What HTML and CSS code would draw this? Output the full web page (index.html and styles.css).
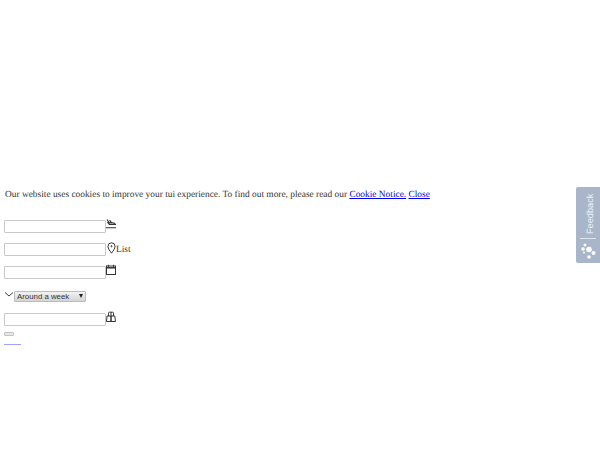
FILE: index.html
```html
<!DOCTYPE html>
<html lang="en">
<head>
  <meta charset="UTF-8" />
  <title>Holidays</title>
  <link rel="stylesheet" href="styles.css">
</head>
<body>
  <p class="cookie">Our website uses cookies to improve your tui experience. To find out more, please read our <a href="#">Cookie Notice.</a> <a href="#">Close</a></p>
  <form class="search">
    <div class="row">
      <input type="text" class="field" />
      <svg class="icon" viewBox="0 0 10 12" width="10" height="12" fill="none" stroke="#333" stroke-width="1.1"><path d="M1 1.5l2.2 3.4h3.3c1.2 0 2.6.4 3 1.6H3.4L1.4 4.2M3.6 2.2l2 2.7M0 9.7h10"/></svg>
    </div>
    <div class="row">
      <input type="text" class="field" />
      <svg class="icon pin" viewBox="0 0 9 12" width="9" height="12" fill="none" stroke="#333" stroke-width="1"><path d="M4.5 11.2C2.6 8.4 1 6.6 1 4.3a3.5 3.5 0 0 1 7 0c0 2.3-1.6 4.1-3.5 6.9z"/><circle cx="4.5" cy="4.2" r=".6"/></svg>
      <span class="label">List</span>
    </div>
    <div class="row">
      <input type="text" class="field" />
      <svg class="icon" viewBox="0 0 10 12" width="10" height="12" fill="none" stroke="#333" stroke-width="1"><rect x=".5" y="2" width="9" height="8.5"/><path d="M.5 3.8h9" stroke-width="1.5"/><path d="M2.5.8v2M7.5.8v2"/></svg>
    </div>
    <div class="row row-select">
      <svg class="chevron" viewBox="0 0 10 8" width="10" height="8" fill="none" stroke="#444" stroke-width="1"><path d="M1 1.5l4 3.5 4-3.5"/></svg>
      <div class="select-wrap">
        <select class="duration"><option>Around a week</option></select>
      </div>
    </div>
    <div class="row row-last">
      <input type="text" class="field" />
      <svg class="icon" viewBox="0 0 10 12" width="10" height="12" fill="none" stroke="#333" stroke-width="1"><path d="M.5 10.5l.5-5.5h4v5.5zM5 10.5V5h3.8l.7 5.5zM2.5 5V2.2a1 1 0 0 1 1-1h3a1 1 0 0 1 1 1V5M5 1.2V5"/></svg>
    </div>
    <button type="button" class="submit"></button>
    <a href="#" class="more"></a>
  </form>
  <div class="feedback">
    <span class="feedback-label">Feedback</span>
    <svg class="feedback-icon" viewBox="0 0 16 16" width="16" height="16" fill="#fff"><circle cx="5" cy="2" r="1.5"/><circle cx="3" cy="6" r="1.8"/><circle cx="9" cy="6.5" r="2.8"/><circle cx="13.5" cy="10" r="2"/><circle cx="9" cy="14" r="1.8"/><circle cx="4" cy="9.5" r="1"/></svg>
  </div>
</body>
</html>
```

FILE: styles.css
```css
body {
  margin: 0;
  padding: 188px 4px 0;
  font-family: "Liberation Serif", "Times New Roman", serif;
  font-size: 9.4px;
  color: #333;
  text-rendering: geometricPrecision;
}

.cookie {
  margin: 0 0 18px;
  padding-left: 1px;
  line-height: 14px;
}

.search {
  display: flex;
  flex-direction: column;
  align-items: flex-start;
}

.row {
  display: flex;
  align-items: flex-start;
  height: 23px;
}

.row-select {
  height: 24px;
  padding-top: 2px;
  box-sizing: border-box;
}

.row-last {
  height: 19px;
}

.field {
  box-sizing: border-box;
  width: 102px;
  height: 13px;
  margin: 0;
  padding: 0;
  background: #fff;
  border: 1px solid #c8c8c8;
  border-radius: 1px;
}

.icon {
  flex: none;
  margin-top: -2px;
}

.pin {
  margin-left: 1px;
  margin-top: -1px;
}

.label {
  margin-top: 1px;
  line-height: 12px;
}

.chevron {
  flex: none;
}

.select-wrap {
  position: relative;
  display: flex;
}

.select-wrap::after {
  content: "";
  position: absolute;
  top: 3px;
  right: 3px;
  border: 2.5px solid transparent;
  border-top: 4px solid #222;
  border-bottom: 0;
}

.duration {
  appearance: none;
  box-sizing: border-box;
  width: 72px;
  height: 11px;
  margin: 0;
  padding: 0 0 0 2px;
  background: linear-gradient(#f2f2f2, #d4d4d4);
  border: 1px solid #bbb;
  border-radius: 1px;
  color: #333;
  font-family: "Liberation Sans", Arial, sans-serif;
  font-size: 7.84px;
  line-height: 9px;
}

.submit {
  display: block;
  width: 10px;
  height: 4px;
  padding: 0;
  background: #e6e6e6;
  border: 1px solid #c4c4c4;
  border-radius: 1px;
}

.more {
  width: 17px;
  height: 1px;
  margin-top: 8px;
  background: #a0a0ff;
}

.feedback {
  position: fixed;
  top: 187px;
  right: 0;
  display: flex;
  flex-direction: column;
  align-items: center;
  width: 24px;
  height: 76px;
  background: #a9b6c9;
  border-radius: 2px 0 0 2px;
}

.feedback-label {
  writing-mode: vertical-rl;
  transform: rotate(180deg);
  height: 42px;
  width: 16px;
  margin-top: 5px;
  margin-left: 4px;
  color: #eef1f5;
  font-family: "Liberation Sans", Arial, sans-serif;
  font-size: 9.2px;
  line-height: 16px;
  text-align: left;
}

.feedback-icon {
  margin-top: 9px;
}

.feedback::after {
  content: "";
  position: absolute;
  top: 51px;
  left: 4px;
  width: 16px;
  height: 1px;
  background: #dfe4ec;
}
```
